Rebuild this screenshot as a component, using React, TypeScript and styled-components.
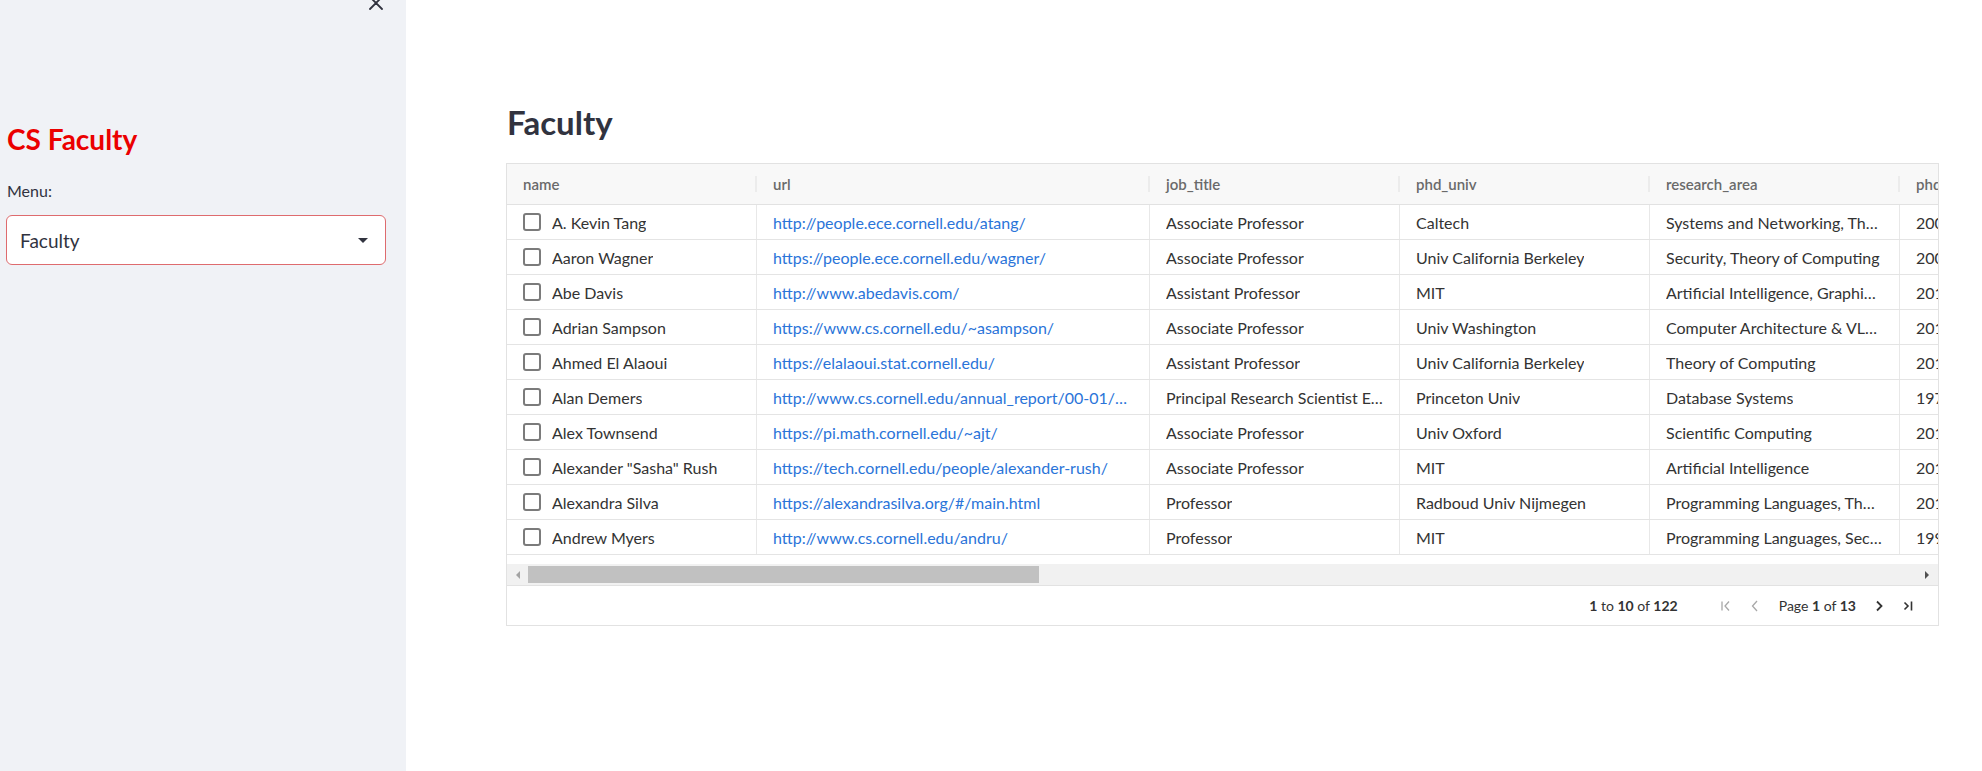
import React from 'react';
import styled, { createGlobalStyle } from 'styled-components';

const GlobalStyle = createGlobalStyle`
  html, body { margin: 0; padding: 0; background: #ffffff; }
  body { font-family: Lato, "Noto Sans", sans-serif; color: #31333f; }
  * { box-sizing: border-box; }
`;

const Page = styled.div`
  display: flex;
  width: 100%;
  height: 771px;
  overflow: hidden;
`;

const Sidebar = styled.aside`
  width: 406px;
  flex: none;
  background: #f0f2f6;
  padding: 0 20px 0 6px;
  display: flex;
  flex-direction: column;
`;

const CloseRow = styled.div`
  height: 10px;
  display: flex;
  justify-content: flex-end;
`;

const CloseIcon = styled.svg`
  width: 14px;
  height: 14px;
  margin-top: -4px;
  margin-right: 3px;
`;

const SideTitle = styled.h2`
  margin: 112px 0 0 1px;
  font-size: 28px;
  line-height: 34px;
  font-weight: 700;
  color: #eb0000;
`;

const FieldLabel = styled.label`
  margin-top: 25px;
  font-size: 16px;
  line-height: 20px;
  color: #31333f;
  padding-left: 1px;
`;

const SelectBox = styled.div`
  margin-top: 14px;
  height: 50px;
  border: 1px solid #de6b6e;
  border-radius: 6px;
  background: #ffffff;
  display: flex;
  align-items: center;
  justify-content: space-between;
  padding: 0 17px 0 13px;
  font-size: 19px;
  color: #31333f;
`;

const Caret = styled.span`
  width: 0;
  height: 0;
  border-left: 5.5px solid transparent;
  border-right: 5.5px solid transparent;
  border-top: 5.5px solid #31333f;
`;

const Main = styled.main`
  flex: 1;
  min-width: 0;
  padding: 0 43px 0 100px;
  display: flex;
  flex-direction: column;
`;

const Heading = styled.h1`
  margin: 102px 0 0 1px;
  font-size: 33px;
  line-height: 40px;
  font-weight: 700;
  color: #31333f;
`;

const Grid = styled.div`
  margin-top: 21px;
  border: 1px solid #e2e2e2;
  display: flex;
  flex-direction: column;
  background: #ffffff;
`;

const Viewport = styled.div`
  overflow: hidden;
`;

const COLS = '250px 393px 250px 250px 250px 250px';

const HeaderRow = styled.div`
  display: grid;
  grid-template-columns: ${COLS};
  width: max-content;
  height: 41px;
  background: #f8f8f8;
  border-bottom: 1px solid #e2e2e2;
`;

const HeaderCell = styled.div`
  position: relative;
  display: flex;
  align-items: center;
  padding: 0 16px;
  font-size: 15px;
  font-weight: 600;
  color: #6a6a6a;
  &::after {
    content: '';
    position: absolute;
    right: 0;
    top: 12px;
    height: 16px;
    width: 2px;
    background: #ececec;
  }
`;

const Row = styled.div`
  display: grid;
  grid-template-columns: ${COLS};
  width: max-content;
  height: 35px;
  border-bottom: 1px solid #e4e4e4;
`;

const Cell = styled.div<{ $link?: boolean }>`
  display: flex;
  align-items: center;
  padding: 0 16px;
  border-right: 1px solid #e8e8e8;
  font-size: 16px;
  color: ${(p) => (p.$link ? '#2a74d9' : '#333333')};
  white-space: nowrap;
  overflow: hidden;
  min-width: 0;
`;

const CellText = styled.span`
  overflow: hidden;
  text-overflow: ellipsis;
  white-space: nowrap;
`;

const Checkbox = styled.span`
  flex: none;
  width: 18px;
  height: 18px;
  border: 2px solid #7b7b7b;
  border-radius: 3px;
  margin-right: 11px;
  background: #ffffff;
`;

const ScrollTrack = styled.div`
  margin-top: 9px;
  height: 21px;
  background: #f1f1f1;
  display: flex;
  align-items: center;
  padding: 0 9px 0 9px;
`;

const Arrow = styled.span<{ $dir: 'left' | 'right' }>`
  flex: none;
  width: 0;
  height: 0;
  border-top: 4px solid transparent;
  border-bottom: 4px solid transparent;
  ${(p) =>
    p.$dir === 'left'
      ? 'border-right: 4px solid #a3a3a3;'
      : 'border-left: 4px solid #505050; margin-left: auto;'}
`;

const Thumb = styled.span`
  flex: none;
  height: 17px;
  margin-left: 8px;
  background: #c1c1c1;
`;

const Pagination = styled.div`
  height: 40px;
  border-top: 1px solid #e2e2e2;
  display: flex;
  align-items: center;
  justify-content: flex-end;
  padding-right: 22px;
  font-size: 14px;
  color: #333333;
`;

const Summary = styled.span`
  margin-right: 40px;
  b { font-weight: 700; }
`;

const PageText = styled.span`
  margin: 0 15px 0 16px;
  b { font-weight: 700; }
`;

const PageIcon = styled.svg<{ $disabled?: boolean }>`
  width: 16px;
  height: 16px;
  flex: none;
  color: ${(p) => (p.$disabled ? '#a8a8a8' : '#333333')};
`;

const IconGap = styled.span`
  width: 13px;
  flex: none;
`;

const IconGapSmall = styled.span`
  width: 13px;
  flex: none;
`;

type Faculty = {
  name: string;
  url: string;
  job: string;
  univ: string;
  area: string;
  year: string;
};

const rows: Faculty[] = [
  { name: 'A. Kevin Tang', url: 'http://people.ece.cornell.edu/atang/', job: 'Associate Professor', univ: 'Caltech', area: 'Systems and Networking, Theory of Computing', year: '2006' },
  { name: 'Aaron Wagner', url: 'https://people.ece.cornell.edu/wagner/', job: 'Associate Professor', univ: 'Univ California Berkeley', area: 'Security, Theory of Computing', year: '2005' },
  { name: 'Abe Davis', url: 'http://www.abedavis.com/', job: 'Assistant Professor', univ: 'MIT', area: 'Artificial Intelligence, Graphics and Vision', year: '2016' },
  { name: 'Adrian Sampson', url: 'https://www.cs.cornell.edu/~asampson/', job: 'Associate Professor', univ: 'Univ Washington', area: 'Computer Architecture & VLSI, Programming Languages', year: '2015' },
  { name: 'Ahmed El Alaoui', url: 'https://elalaoui.stat.cornell.edu/', job: 'Assistant Professor', univ: 'Univ California Berkeley', area: 'Theory of Computing', year: '2018' },
  { name: 'Alan Demers', url: 'http://www.cs.cornell.edu/annual_report/00-01/bios.htm', job: 'Principal Research Scientist Emeritus', univ: 'Princeton Univ', area: 'Database Systems', year: '1975' },
  { name: 'Alex Townsend', url: 'https://pi.math.cornell.edu/~ajt/', job: 'Associate Professor', univ: 'Univ Oxford', area: 'Scientific Computing', year: '2014' },
  { name: 'Alexander "Sasha" Rush', url: 'https://tech.cornell.edu/people/alexander-rush/', job: 'Associate Professor', univ: 'MIT', area: 'Artificial Intelligence', year: '2014' },
  { name: 'Alexandra Silva', url: 'https://alexandrasilva.org/#/main.html', job: 'Professor', univ: 'Radboud Univ Nijmegen', area: 'Programming Languages, Theory of Computing', year: '2010' },
  { name: 'Andrew Myers', url: 'http://www.cs.cornell.edu/andru/', job: 'Professor', univ: 'MIT', area: 'Programming Languages, Security', year: '1999' },
];

const headers = ['name', 'url', 'job_title', 'phd_univ', 'research_area', 'phd_year'];

export default function App() {
  return (
    <>
      <GlobalStyle />
      <Page>
        <Sidebar>
          <CloseRow>
            <CloseIcon viewBox="0 0 14 14" fill="none" stroke="#31333f" strokeWidth="1.8" strokeLinecap="round">
              <path d="M1 1 L13 13 M13 1 L1 13" />
            </CloseIcon>
          </CloseRow>
          <SideTitle>CS Faculty</SideTitle>
          <FieldLabel>Menu:</FieldLabel>
          <SelectBox>
            <span>Faculty</span>
            <Caret />
          </SelectBox>
        </Sidebar>
        <Main>
          <Heading>Faculty</Heading>
          <Grid>
            <Viewport>
              <HeaderRow>
                {headers.map((h) => (
                  <HeaderCell key={h}>{h}</HeaderCell>
                ))}
              </HeaderRow>
              {rows.map((r) => (
                <Row key={r.name}>
                  <Cell>
                    <Checkbox />
                    <CellText>{r.name}</CellText>
                  </Cell>
                  <Cell $link>
                    <CellText>{r.url}</CellText>
                  </Cell>
                  <Cell>
                    <CellText>{r.job}</CellText>
                  </Cell>
                  <Cell>
                    <CellText>{r.univ}</CellText>
                  </Cell>
                  <Cell>
                    <CellText>{r.area}</CellText>
                  </Cell>
                  <Cell>
                    <CellText>{r.year}</CellText>
                  </Cell>
                </Row>
              ))}
            </Viewport>
            <ScrollTrack>
              <Arrow $dir="left" />
              <Thumb style={{ width: `${Math.round((1431 / 1643) * 587)}px` }} />
              <Arrow $dir="right" />
            </ScrollTrack>
            <Pagination>
              <Summary>
                <b>1</b> to <b>10</b> of <b>122</b>
              </Summary>
              <PageIcon $disabled viewBox="0 0 16 16" fill="none" stroke="currentColor" strokeWidth="1.3">
                <path d="M4 3.5 V12.5 M11 3.5 L7 8 L11 12.5" />
              </PageIcon>
              <IconGap />
              <PageIcon $disabled viewBox="0 0 16 16" fill="none" stroke="currentColor" strokeWidth="1.3">
                <path d="M10 3 L5.5 8 L10 13" />
              </PageIcon>
              <PageText>
                Page <b>1</b> of <b>13</b>
              </PageText>
              <PageIcon viewBox="0 0 16 16" fill="none" stroke="currentColor" strokeWidth="1.8">
                <path d="M6 3.5 L10.5 8 L6 12.5" />
              </PageIcon>
              <IconGapSmall />
              <PageIcon viewBox="0 0 16 16" fill="none" stroke="currentColor" strokeWidth="1.6">
                <path d="M4.5 4.5 L8 8 L4.5 11.5 M11.5 3.5 V12.5" />
              </PageIcon>
            </Pagination>
          </Grid>
        </Main>
      </Page>
    </>
  );
}
